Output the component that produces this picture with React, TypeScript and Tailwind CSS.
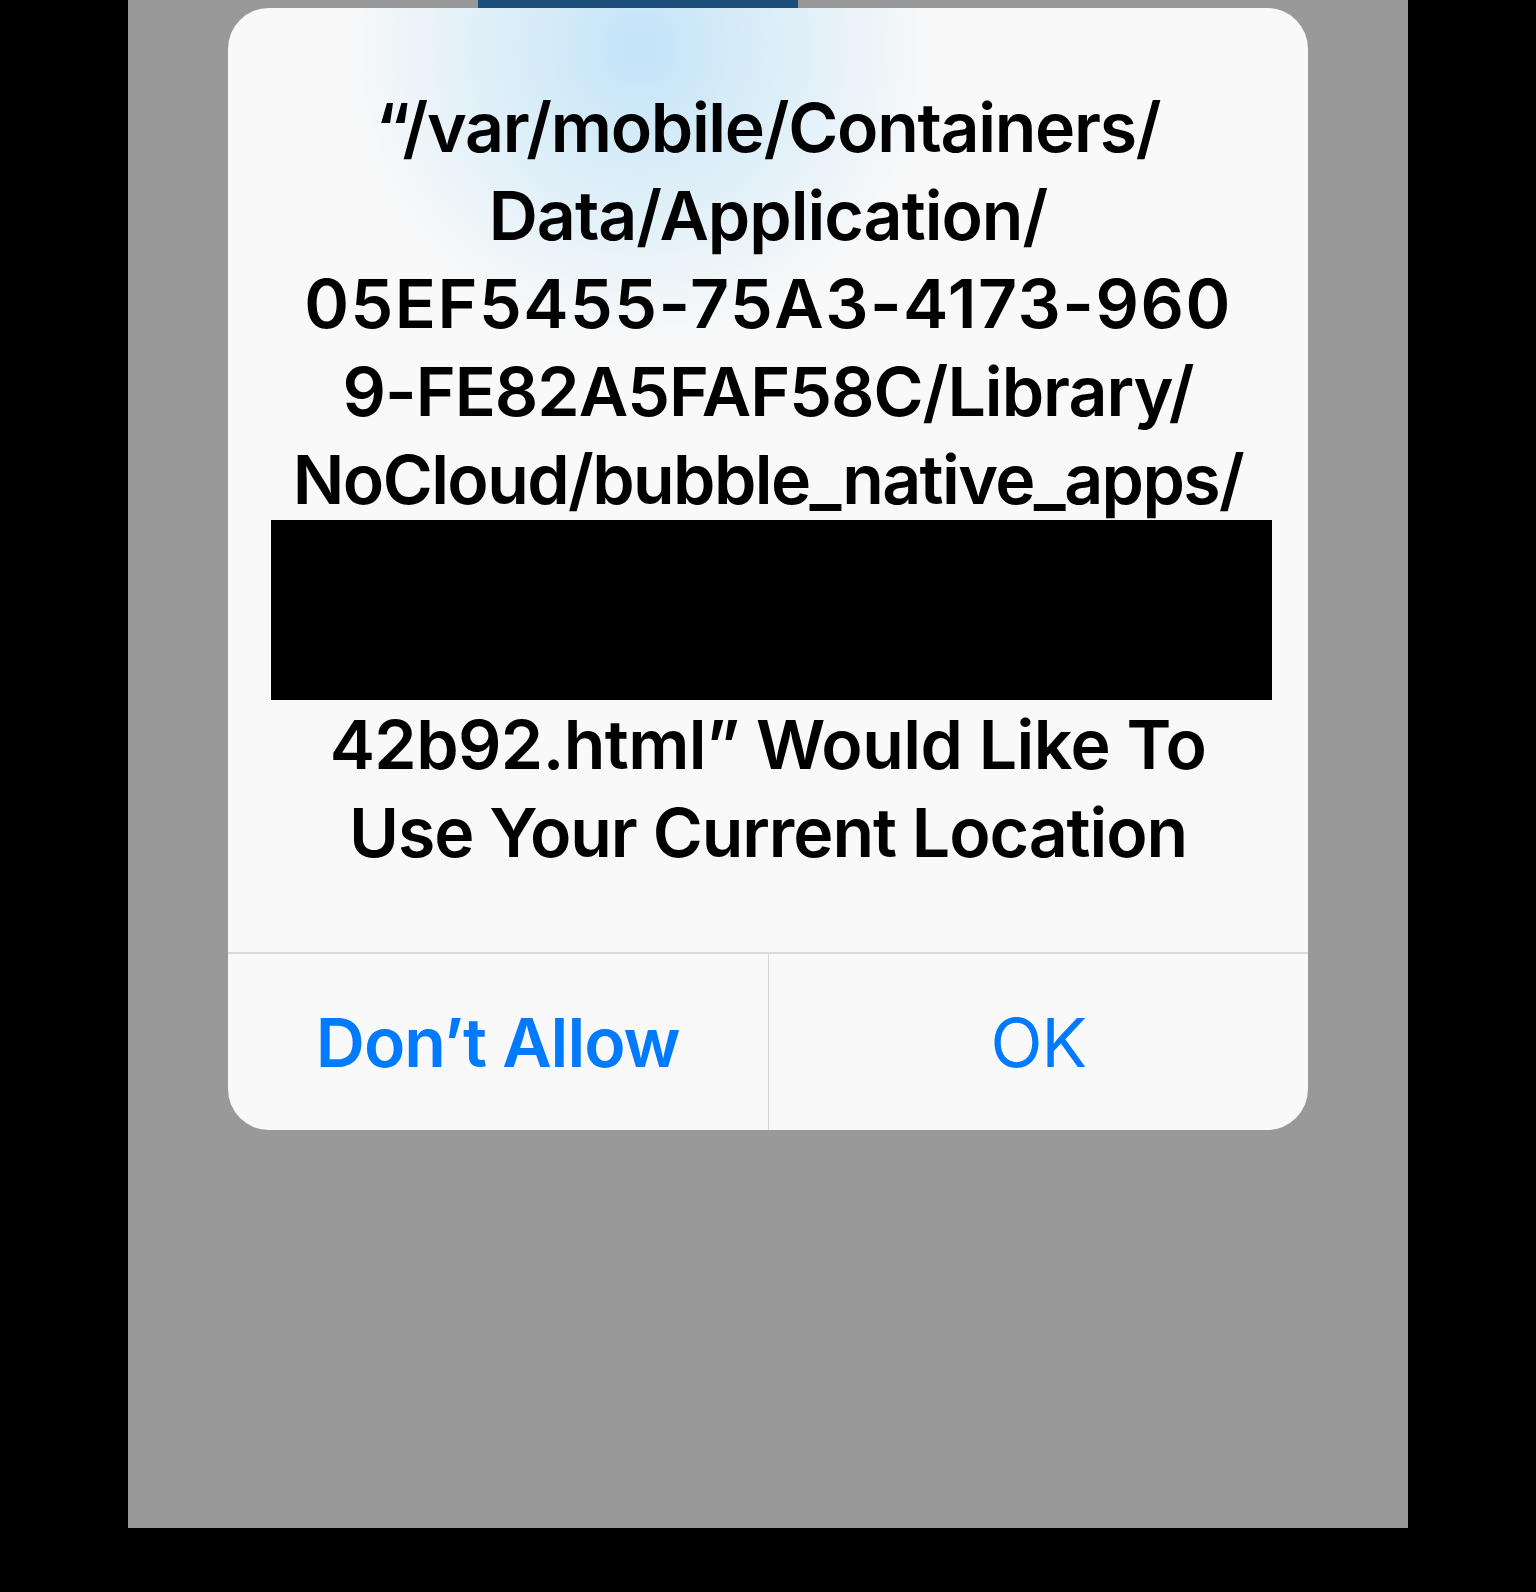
export default function App() {
  const font = { fontFamily: "Inter, 'Noto Sans', 'Liberation Sans', sans-serif" }

  return (
    <div className="h-[1592px] w-[1536px] bg-black" style={font}>
      <div className="ml-[128px] flex h-[1528px] w-[1280px] flex-col bg-[#999999]">
        {/* page content peeking out behind the alert */}
        <div className="ml-[350px] h-[8px] w-[320px] bg-[#1d4e7a]" />

        <div className="mx-[100px] overflow-hidden rounded-[41px] bg-[#f9f9f9] bg-[radial-gradient(ellipse_300px_300px_at_412px_40px,#c3e3f8_0%,#d6ecf8_35%,rgba(249,249,249,0)_100%)]">
          <div className="px-[40px] pb-[76px] pt-[75px] text-center text-[68px] font-semibold leading-[88px] tracking-[-1px] text-black">
            <p>
              <span className="tracking-[-1.3px]">“/var/mobile/Containers/</span>
              <br />
              Data/Application/
              <br />
              <span className="tracking-[1.5px]">05EF5455-75A3-4173-960</span>
              <br />
              9-FE82A5FAF58C/Library/
              <br />
              <span className="tracking-[-1.6px]">NoCloud/bubble_native_apps/</span>
            </p>
            <div className="ml-[3px] mt-[-3px] h-[180px] w-[1001px] bg-black" />
            <p>
              <span className="tracking-[-0.6px]">42b92.html” Would Like To</span>
              <br />
              <span className="tracking-[-1.1px]">Use Your Current Location</span>
            </p>
          </div>

          <div className="flex h-[178px] border-t-2 border-[#dbdbdb]">
            <button className="flex flex-1 items-center justify-center border-r border-[#d4d4d4] text-[68px] font-semibold tracking-[-1px] text-[#007aff]">
              Don’t Allow
            </button>
            <button className="flex flex-1 items-center justify-center text-[68px] font-normal tracking-[-1px] text-[#007aff]">
              OK
            </button>
          </div>
        </div>
      </div>
    </div>
  )
}
